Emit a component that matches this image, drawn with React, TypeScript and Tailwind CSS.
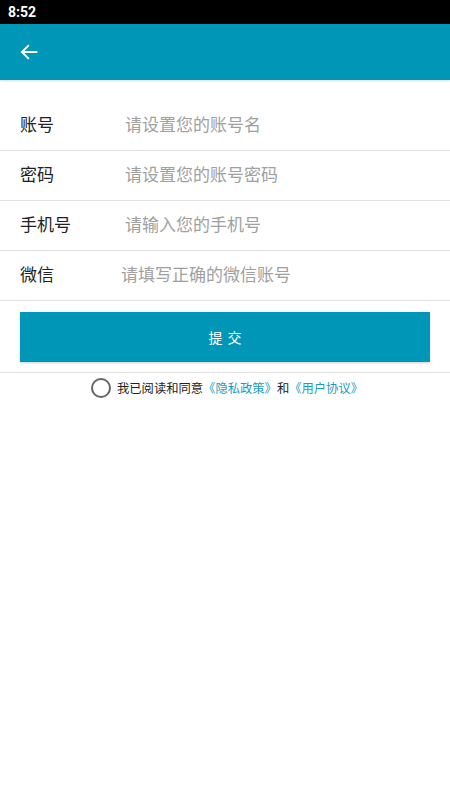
import React from 'react';

const fields = [
  { label: '账号', placeholder: '请设置您的账号名', indent: 'pl-[105px]' },
  { label: '密码', placeholder: '请设置您的账号密码', indent: 'pl-[105px]' },
  { label: '手机号', placeholder: '请输入您的手机号', indent: 'pl-[105px]' },
  { label: '微信', placeholder: '请填写正确的微信账号', indent: 'pl-[101px]' },
];

const App: React.FC = () => {
  return (
    <div className="w-[450px] min-h-[800px] bg-white font-['Noto_Sans_CJK_SC',sans-serif]">
      {/* status bar */}
      <div className="h-6 bg-black flex items-center px-2">
        <span className="text-white text-[14px] font-bold font-['Roboto',sans-serif] leading-none">8:52</span>
      </div>

      {/* header */}
      <div className="h-14 bg-[#0096b7] flex items-center px-[19px] shadow-[0_1px_2px_rgba(0,0,0,0.15)]">
        <svg className="w-5 h-5" viewBox="0 0 24 24" fill="none" stroke="white" strokeWidth="2.2" strokeLinecap="square">
          <path d="M21 12H4M11 4.5L3.5 12L11 19.5" />
        </svg>
      </div>

      {/* form */}
      <div className="pt-[21px]">
        {fields.map((f) => (
          <div key={f.label} className="h-[50px] flex items-center border-b border-[#e0e0e0] px-5 pb-[3px]">
            <span className="w-0 whitespace-nowrap text-[17px] text-[#222]">{f.label}</span>
            <span className={`${f.indent} whitespace-nowrap text-[17px] text-[#a0a0a0]`}>{f.placeholder}</span>
          </div>
        ))}
      </div>

      <div className="px-5 pt-[11px] pb-[10px] border-b border-[#e0e0e0]">
        <button className="w-full h-[50px] bg-[#0096b7] text-white text-[14px] tracking-[5px] pl-[5px] shadow-[0_1px_2px_rgba(0,0,0,0.2)]">
          提交
        </button>
      </div>

      <div className="flex items-center justify-center gap-[6px] pt-[5px] pl-[4px]">
        <span className="w-5 h-5 rounded-full border-2 border-[#666]" />
        <span className="text-[12.3px] text-[#222]">
          我已阅读和同意<span className="text-[#1a9cc0]">《隐私政策》</span>和<span className="text-[#1a9cc0]">《用户协议》</span>
        </span>
      </div>
    </div>
  );
};

export default App;
